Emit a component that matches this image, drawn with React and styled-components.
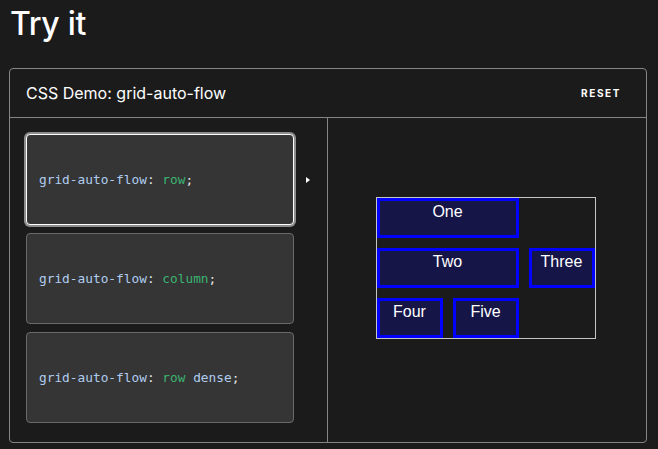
import React, { useState } from 'react'
import styled, { createGlobalStyle } from 'styled-components'

const GlobalStyle = createGlobalStyle`
  html, body {
    margin: 0;
    padding: 0;
    background: #1b1b1b;
    color: #ffffff;
    font-family: Inter, "Noto Sans", sans-serif;
  }
`

const Page = styled.div`
  padding: 0 12px 0 9px;
`

const Title = styled.h2`
  margin: 0;
  padding: 2px 0 0 1px;
  height: 68px;
  box-sizing: border-box;
  font-size: 32px;
  font-weight: 500;
  line-height: 44px;
  letter-spacing: -0.3px;
`

const Panel = styled.section`
  border: 1px solid #858585;
  border-radius: 4px;
  width: 638px;
  height: 375px;
  box-sizing: border-box;
  display: flex;
  flex-direction: column;
`

const Header = styled.header`
  height: 48px;
  border-bottom: 1px solid #858585;
  display: flex;
  align-items: center;
  justify-content: space-between;
  padding: 0 25px 0 16px;
`

const HeaderTitle = styled.h4`
  margin: 0;
  font-size: 16px;
  font-weight: 400;
  color: #ffffff;
`

const ResetButton = styled.button`
  background: transparent;
  border: none;
  color: #ffffff;
  font-family: Inter, sans-serif;
  font-size: 10px;
  font-weight: 700;
  letter-spacing: 1.6px;
  padding: 4px 0;
  cursor: pointer;
`

const Body = styled.div`
  flex: 1;
  display: grid;
  grid-template-columns: 318px 1fr;
`

const Choices = styled.div`
  border-right: 1px solid #858585;
  padding: 16px 0 0 16px;
  display: flex;
  flex-direction: column;
  gap: 8px;
`

const ChoiceRow = styled.div`
  display: flex;
  align-items: center;
`

const Choice = styled.button`
  width: 268px;
  height: 91px;
  box-sizing: border-box;
  background: #353535;
  border: 1px solid ${(p) => (p.$active ? '#ffffff' : '#6a6a6a')};
  box-shadow: ${(p) => (p.$active ? '0 0 0 2px #8d8d8d' : 'none')};
  border-radius: 4px;
  padding: 0 12px;
  text-align: left;
  font-family: "DejaVu Sans Mono", monospace;
  font-size: 12.8px;
  color: #b0cdf0;
  cursor: pointer;
`

const Value = styled.span`
  color: #3bb371;
`

const Punct = styled.span`
  color: #e6e6e6;
`

const Arrow = styled.span`
  width: 0;
  height: 0;
  margin-left: 12px;
  border-top: 3.5px solid transparent;
  border-bottom: 3.5px solid transparent;
  border-left: 4px solid ${(p) => (p.$active ? '#ffffff' : 'transparent')};
`

const Output = styled.div`
  display: flex;
  align-items: center;
  justify-content: center;
  padding: 0 3px 24px 0;
`

const DemoGrid = styled.div`
  border: 1px solid #c5c5c5;
  display: grid;
  grid-template-columns: repeat(3, 1fr);
  grid-template-rows: repeat(3, minmax(40px, auto));
  grid-auto-flow: ${(p) => p.$flow};
  gap: 10px;
  width: 220px;
  box-sizing: border-box;
`

const Item = styled.div`
  background-color: rgba(0, 0, 255, 0.2);
  border: 3px solid #0000ff;
  color: #ffffff;
  font-family: "Liberation Sans", Arial, sans-serif;
  font-size: 16px;
  text-align: center;
  line-height: 20px;
  padding-top: 1px;
  grid-column: ${(p) => (p.$span ? 'auto / span 2' : 'auto')};
`

const choices = [
  { flow: 'row', rest: '' },
  { flow: 'column', rest: '' },
  { flow: 'row', rest: ' dense' },
]

const items = [
  { label: 'One', span: true },
  { label: 'Two', span: true },
  { label: 'Three' },
  { label: 'Four' },
  { label: 'Five' },
]

export default function App() {
  const [active, setActive] = useState(0)
  const current = choices[active]

  return (
    <Page>
      <GlobalStyle />
      <Title>Try it</Title>
      <Panel>
        <Header>
          <HeaderTitle>CSS Demo: grid-auto-flow</HeaderTitle>
          <ResetButton onClick={() => setActive(0)}>RESET</ResetButton>
        </Header>
        <Body>
          <Choices>
            {choices.map((c, i) => (
              <ChoiceRow key={i}>
                <Choice $active={i === active} onClick={() => setActive(i)}>
                  grid-auto-flow<Punct>:</Punct> <Value>{c.flow}</Value>
                  {c.rest}
                  <Punct>;</Punct>
                </Choice>
                <Arrow $active={i === active} />
              </ChoiceRow>
            ))}
          </Choices>
          <Output>
            <DemoGrid $flow={current.flow + current.rest}>
              {items.map((it) => (
                <Item key={it.label} $span={it.span}>
                  {it.label}
                </Item>
              ))}
            </DemoGrid>
          </Output>
        </Body>
      </Panel>
    </Page>
  )
}
